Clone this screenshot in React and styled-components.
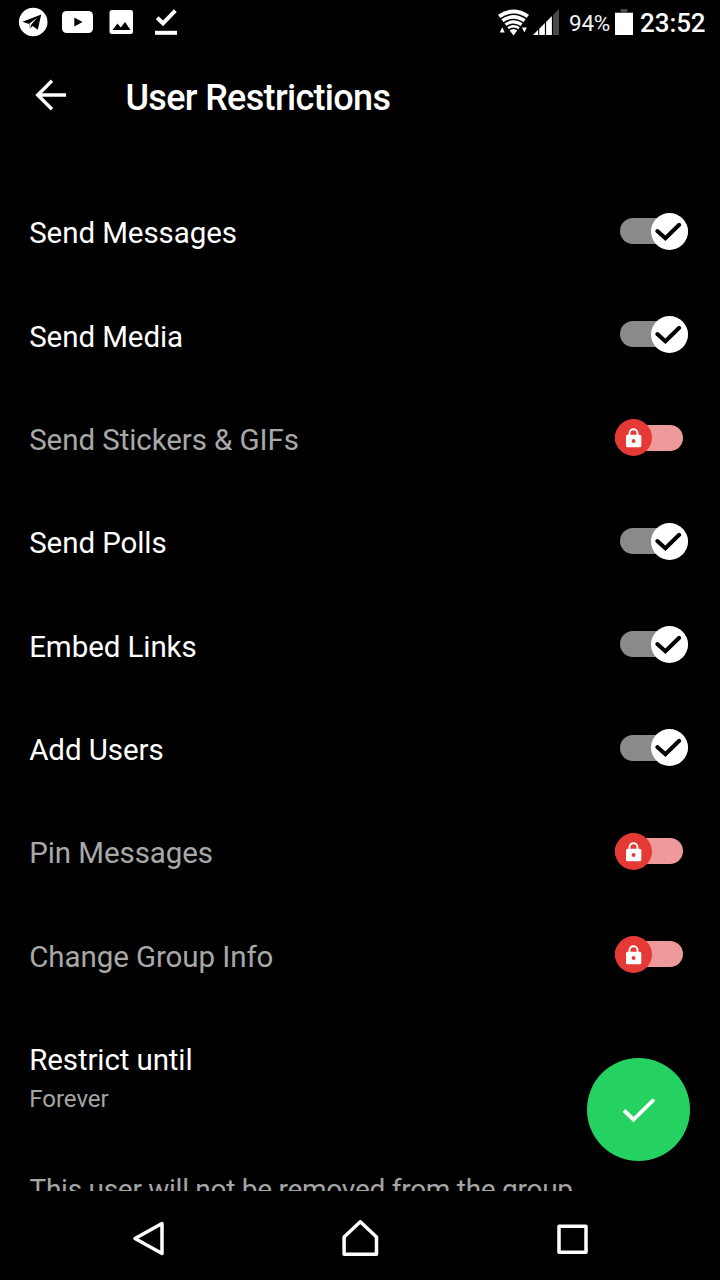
import React, { useState } from 'react'
import styled, { createGlobalStyle } from 'styled-components'

const GlobalStyle = createGlobalStyle`
*, *::before, *::after {
  box-sizing: border-box;
}

body {
  margin: 0;
  background: #000;
  font-family: Roboto, sans-serif;
}
`

const Screen = styled.div`
position: relative;
display: flex;
flex-direction: column;
width: 720px;
height: 1280px;
overflow: hidden;
background: #000;
color: #fff;
`

const StatusBar = styled.header`
display: flex;
flex: none;
justify-content: space-between;
align-items: center;
height: 44px;
padding: 0 14.5px 0 18px;
`

const Notifications = styled.div`
display: flex;
align-items: center;
gap: 14px;
`

const SystemInfo = styled.div`
display: flex;
align-items: center;
`

const WifiIcon = styled.svg`
margin-right: 3px;
`

const SignalIcon = styled.svg`
margin-right: 10px;
`

const BatteryLevel = styled.span`
width: 46px;
padding-top: 2px;
font-size: 22.5px;
line-height: 26px;
letter-spacing: -0.3px;
color: #f0f0f0;
`

const BatteryIcon = styled.svg`
margin-right: 7px;
`

const Clock = styled.span`
padding-top: 2px;
font-size: 26px;
font-weight: 500;
line-height: 30px;
letter-spacing: -0.1px;
`

const TitleBar = styled.div`
display: flex;
flex: none;
align-items: center;
height: 106px;
padding-left: 34px;
`

const BackButton = styled.button`
display: flex;
width: 34px;
height: 34px;
margin: 0 57.5px 4px 0;
padding: 0;
border: none;
background: none;
color: inherit;
cursor: pointer;
`

const Title = styled.h1`
margin: 0;
padding-top: 1px;
font-size: 36px;
font-weight: 500;
line-height: 42px;
letter-spacing: -0.68px;
`

const Content = styled.main`
flex: 1;
min-height: 0;
padding-top: 29.5px;
overflow: hidden;
`

const Row = styled.div`
display: flex;
justify-content: space-between;
align-items: center;
height: 103.33px;
padding: 0 32px 0 29.2px;
`

const Label = styled.span`
padding-top: 4.6px;
font-size: 29.5px;
line-height: 36px;
letter-spacing: -0.08px;
color: ${props => props.$locked ? '#a8a8a8' : '#fff'};
`

const Toggle = styled.button`
display: flex;
justify-content: ${props => props.$on ? 'flex-end' : 'flex-start'};
align-items: center;
width: 68px;
height: 26px;
margin-right: ${props => props.$on ? '0' : '5px'};
padding: 0;
border: none;
border-radius: 13px;
background: ${props => props.$locked ? '#ef9a9a' : '#8a8a8a'};
cursor: pointer;
`

const Thumb = styled.span`
display: flex;
flex: none;
justify-content: center;
align-items: center;
width: 37px;
height: 37px;
border-radius: 50%;
background: ${props => props.$locked ? '#e53935' : '#fff'};
color: ${props => props.$locked ? '#fff' : '#000'};
`

const Until = styled.div`
display: flex;
flex-direction: column;
height: 166px;
padding: 35.5px 29.2px 0;
`

const UntilLabel = styled.span`
font-size: 29.5px;
line-height: 36px;
letter-spacing: -0.11px;
`

const UntilValue = styled.span`
padding-top: 6px;
font-size: 24px;
line-height: 30px;
color: #a5a5a5;
`

const Note = styled.p`
margin: 0;
padding: 0 29.5px;
font-size: 28px;
line-height: 36px;
letter-spacing: -0.27px;
white-space: nowrap;
color: #a5a5a5;
`

const ConfirmButton = styled.button`
position: absolute;
right: 30px;
bottom: 119px;
display: flex;
justify-content: center;
align-items: center;
width: 102.6px;
height: 102.6px;
padding: 0;
border: none;
border-radius: 50%;
background: #25d160;
color: #fff;
cursor: pointer;
`

const NavBar = styled.nav`
display: flex;
flex: none;
justify-content: space-between;
align-items: center;
height: 89px;
padding: 6px 131px 0 130px;
`

const NavButton = styled.button`
display: flex;
padding: 0;
border: none;
background: none;
color: #fff;
cursor: pointer;
`

const TelegramIcon = () => (
  <svg width="30" height="30" viewBox="0 0 30 30">
    <circle cx="15.2" cy="15" r="14.3" fill="#fff"/>
    <path d="M4.5 14.8 23.2 7.6 19.8 22.8 14.6 19 12.2 21.3 11 17Z" fill="#000"/>
    <path d="M11.2 16.8 19 11 13.2 17.8 12.3 20.8Z" fill="#fff"/>
  </svg>
)

const YoutubeIcon = () => (
  <svg width="31" height="24" viewBox="0 0 31 24">
    <rect x="0" y="1" width="31" height="22" rx="4.5" fill="#fff"/>
    <path d="M12.3 7.5 20.5 12 12.3 16.5Z" fill="#000"/>
  </svg>
)

const PictureIcon = () => (
  <svg width="28" height="24" viewBox="0 0 28 24">
    <rect x="2.5" y="0" width="23.5" height="24" rx="2.5" fill="#fff"/>
    <path d="M5.5 20 10.5 13.5 13.8 17.4 18 12 23.5 20Z" fill="#000"/>
  </svg>
)

const DownloadDoneIcon = () => (
  <svg width="30" height="26" viewBox="0 0 30 26">
    <path d="M8.2 8.7 14 14.3 26.3 1.6" fill="none" stroke="#fff" strokeWidth="4"/>
    <rect x="6" y="21.8" width="22" height="4" fill="#fff"/>
  </svg>
)

// solid fan, cut into bands by thin dark arcs
const Wifi = () => (
  <WifiIcon width="32" height="28" viewBox="0 0 32 28">
    <path d="M0 6.8Q15.5 -4 31 6.8L15.5 27.5Z" fill="#fff"/>
    <g fill="none" stroke="#000" strokeWidth="1.5">
      <path d="M2 11.2Q15.5 1.4 29 11.2"/>
      <path d="M4.5 15.8Q15.5 7 26.5 15.8"/>
      <path d="M7 19.8Q15.5 12.8 24 19.8"/>
      <path d="M9.5 23Q15.5 17.4 21.5 23"/>
    </g>
    <path d="M1.8 24.5 4.2 19.3 6.8 24.5ZM24 19.5H28.8L26.4 24.5Z" fill="#fff"/>
  </WifiIcon>
)

const Signal = () => (
  <SignalIcon width="26" height="26" viewBox="0 0 26 26">
    <path d="M0 26 5.2 20.8V26Z" fill="#fff"/>
    <path d="M6.3 19.7 11.9 14.1V26H6.3Z" fill="#fff"/>
    <path d="M13.1 12.9 18.9 7.1V26H13.1Z" fill="#fff"/>
    <path d="M20.1 5.9 26 0V26H20.1Z" fill="#4a4a4a"/>
  </SignalIcon>
)

const Battery = () => (
  <BatteryIcon width="18" height="26" viewBox="0 0 18 26">
    <path d="M5.5 0H12.5V3H18V5H0V3H5.5Z" fill="#4a4a4a"/>
    <rect y="4" width="18" height="22" fill="#fff"/>
  </BatteryIcon>
)

const BackArrow = () => (
  <svg width="34" height="34" viewBox="0 0 34 34" fill="none" stroke="currentColor" strokeWidth="3.4">
    <path d="M32 17H4M18 2.7 3.7 17 18 31.3"/>
  </svg>
)

const ThumbCheck = () => (
  <svg width="37" height="37" viewBox="0 0 37 37" fill="none" stroke="currentColor" strokeWidth="4" strokeLinecap="round" strokeLinejoin="miter">
    <path d="M6.3 18 14.4 25.3 28.2 11.8"/>
  </svg>
)

const ThumbLock = () => (
  <svg width="37" height="37" viewBox="0 0 37 37">
    <path d="M14.5 17V14.2A4 4 0 0 1 22.5 14.2V17" fill="none" stroke="currentColor" strokeWidth="1.9"/>
    <rect x="11" y="15.7" width="15.3" height="12.6" rx="1.5" fill="currentColor"/>
    <circle cx="18.6" cy="22" r="1.9" fill="#e53935"/>
  </svg>
)

const permissions = [
  { label: 'Send Messages' },
  { label: 'Send Media' },
  { label: 'Send Stickers & GIFs', locked: true },
  { label: 'Send Polls' },
  { label: 'Embed Links' },
  { label: 'Add Users' },
  { label: 'Pin Messages', locked: true },
  { label: 'Change Group Info', locked: true },
]

const Permission = ({ label, locked }) => {

  const [on, setOn] = useState(!locked);

  // locked permissions can't be switched on
  const handleClick = () => !locked && setOn(!on)

  return (
    <Row>
      <Label $locked={locked}>{label}</Label>
      <Toggle $on={on} $locked={locked} onClick={() => handleClick()} aria-label={label}>
        <Thumb $locked={locked}>
          {locked ? <ThumbLock/> : on ? <ThumbCheck/> : null}
        </Thumb>
      </Toggle>
    </Row>
  )
}

const App = () => {
  return (
    <Screen>
      <GlobalStyle/>
      <StatusBar>
        <Notifications>
          <TelegramIcon/>
          <YoutubeIcon/>
          <PictureIcon/>
          <DownloadDoneIcon/>
        </Notifications>
        <SystemInfo>
          <Wifi/>
          <Signal/>
          <BatteryLevel>94%</BatteryLevel>
          <Battery/>
          <Clock>23:52</Clock>
        </SystemInfo>
      </StatusBar>

      <TitleBar>
        <BackButton aria-label="Back"><BackArrow/></BackButton>
        <Title>User Restrictions</Title>
      </TitleBar>

      <Content>
        {permissions.map(p => <Permission key={p.label} {...p}/>)}
        <Until>
          <UntilLabel>Restrict until</UntilLabel>
          <UntilValue>Forever</UntilValue>
        </Until>
        <Note>This user will not be removed from the group</Note>
      </Content>

      <ConfirmButton aria-label="Confirm">
        <svg width="34" height="28" viewBox="0 0 34 28" fill="none" stroke="currentColor" strokeWidth="3.8">
          <path d="M2 14.5 11.5 23.5 32 3.5"/>
        </svg>
      </ConfirmButton>

      <NavBar>
        <NavButton aria-label="Back">
          <svg width="36" height="40" viewBox="0 0 36 40" fill="none" stroke="currentColor" strokeWidth="3.5" strokeLinejoin="round">
            <path d="M32 4.5V34.5L5 19.5Z"/>
          </svg>
        </NavButton>
        <NavButton aria-label="Home">
          <svg width="40" height="40" viewBox="0 0 40 40" fill="none" stroke="currentColor" strokeWidth="3.5" strokeLinejoin="round">
            <path d="M3.1 18 19.3 2.8 35.5 18V35.2H3.1Z"/>
          </svg>
        </NavButton>
        <NavButton aria-label="Recents">
          <svg width="34" height="36" viewBox="0 0 34 36" fill="none" stroke="currentColor" strokeWidth="3.5" strokeLinejoin="round">
            <rect x="4" y="5.2" width="27" height="26"/>
          </svg>
        </NavButton>
      </NavBar>
    </Screen>
  )
}

export default App
